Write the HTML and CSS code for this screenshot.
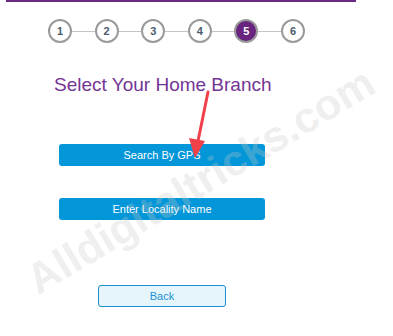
FILE: index.html
```html
<!DOCTYPE html>
<html>
<head>
<meta charset="utf-8">
<link rel="stylesheet" href="styles.css">
</head>
<body>
<div class="page">
  <div class="stepper">
    <div class="step">1</div><div class="line"></div>
    <div class="step">2</div><div class="line"></div>
    <div class="step">3</div><div class="line"></div>
    <div class="step">4</div><div class="line"></div>
    <div class="step active">5</div><div class="line"></div>
    <div class="step">6</div>
  </div>
  <h1 class="title">Select Your Home Branch</h1>
  <div class="actions">
    <button class="btn primary">Search By GPS</button>
    <button class="btn primary second">Enter Locality Name</button>
  </div>
  <button class="btn back">Back</button>
</div>
<div class="watermark">Alldigitaltricks.com</div>
<svg class="arrow" width="40" height="80" viewBox="0 0 40 80">
  <line x1="26" y1="4" x2="15" y2="58" stroke="#f0404a" stroke-width="3" stroke-linecap="round"/>
  <polygon points="7,50 13,70 23,53" fill="#f0404a"/>
</svg>
</body>
</html>
```
FILE: styles.css
```css
html, body {
  margin: 0;
  padding: 0;
  background: #ffffff;
  font-family: "Liberation Sans", Arial, sans-serif;
}
.page {
  margin-left: 6px;
  width: 350px;
  border-top: 2px solid #6b2a86;
  height: 334px;
}
.stepper {
  display: flex;
  align-items: center;
  padding-left: 42px;
  margin-top: 17px;
}
.step {
  width: 20px;
  height: 20px;
  border: 2px solid #9a9a9a;
  border-radius: 50%;
  display: flex;
  align-items: center;
  justify-content: center;
  font-size: 11px;
  font-weight: bold;
  color: #4b5b6e;
  background: #fff;
  flex: none;
}
.step.active {
  background: #68247f;
  color: #ffffff;
}
.line {
  width: 22.6px;
  height: 1px;
  background: #c4c4c4;
  flex: none;
}
.title {
  margin: 30px 0 0 48px;
  font-size: 19px;
  font-weight: normal;
  color: #733594;
  line-height: 23px;
}
.actions {
  display: flex;
  flex-direction: column;
  gap: 32px;
  margin: 48px 0 0 53px;
}
.btn {
  display: flex;
  align-items: center;
  justify-content: center;
  font-family: "Liberation Sans", Arial, sans-serif;
  font-size: 11px;
  border-radius: 3px;
  padding: 0;
  cursor: pointer;
}
.primary {
  width: 206px;
  height: 22px;
  background: #0396d8;
  color: #ffffff;
  border: none;
}
.back {
  width: 128px;
  height: 22px;
  margin: 65px 0 0 92px;
  background: #e6f5fc;
  border: 1px solid #1a90d0;
  color: #1a90d0;
}
.watermark {
  position: absolute;
  left: 18px;
  top: 0;
  font-size: 43px;
  font-weight: bold;
  color: rgba(200, 200, 200, 0.3);
  transform-origin: left top;
  white-space: nowrap;
  pointer-events: none;
  transform: translate(0, 262px) rotate(-31deg);
}
.arrow {
  position: absolute;
  left: 182px;
  top: 88px;
}
```
